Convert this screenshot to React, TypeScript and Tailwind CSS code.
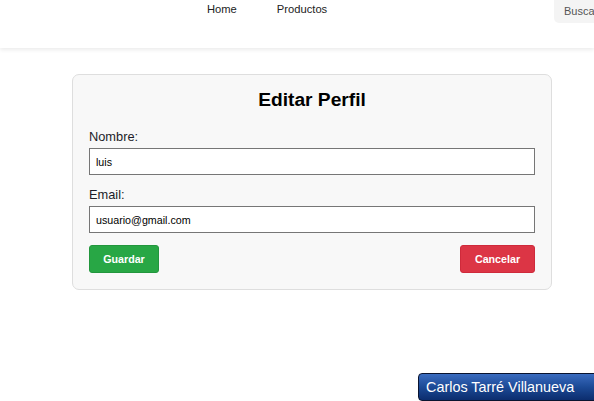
export default function App() {
  return (
    <div className="relative w-[594px] h-[401px] overflow-hidden bg-white font-['Liberation_Sans',Arial,sans-serif]">
      {/* header */}
      <header className="relative h-[48px] bg-white shadow-[0_2px_4px_rgba(0,0,0,0.08)] flex items-start">
        <nav className="flex ml-[207px] gap-[40px] pt-[2px] text-[11.2px] leading-[13px] text-[#222]">
          <a className="mt-[1px]">Home</a>
          <a className="mt-[1px]">Productos</a>
        </nav>
        <div className="ml-auto w-[40px] h-[23px] bg-[#f4f4f4] rounded-bl-[5px] pl-[10px] pt-[3px] text-[11px] text-[#555] whitespace-nowrap overflow-hidden">
          Buscar...
        </div>
      </header>

      {/* card */}
      <main className="pt-[26px]">
        <div className="ml-[72px] w-[480px] bg-[#f8f8f8] border border-[#dedede] rounded-[7px] px-[16px] pt-[14px] pb-[16px]">
          <h2 className="text-center text-[19.2px] leading-[22px] font-bold text-black">Editar Perfil</h2>

          <label className="block mt-[18px] text-[12.8px] leading-[15px] text-[#1c1c28]">Nombre:</label>
          <input
            defaultValue="luis"
            className="block mt-[4px] w-full h-[27px] border border-[#767676] bg-white px-[6px] text-[10.7px] text-black outline-none"
          />

          <label className="block mt-[12px] text-[12.8px] leading-[15px] text-[#1c1c28]">Email:</label>
          <input
            defaultValue="usuario@gmail.com"
            className="block mt-[4px] w-full h-[27px] border border-[#767676] bg-white px-[6px] text-[10.7px] text-black outline-none"
          />

          <div className="flex justify-between mt-[12px]">
            <button className="h-[28px] w-[70px] bg-[#28a745] border border-[#22963d] rounded-[3px] text-white font-bold text-[10.7px]">
              Guardar
            </button>
            <button className="h-[28px] w-[75px] bg-[#dc3545] border border-[#cf2a3b] rounded-[3px] text-white font-bold text-[10.7px]">
              Cancelar
            </button>
          </div>
        </div>
      </main>

      {/* author badge */}
      <div className="absolute left-[418px] top-[373px] w-[180px] h-[28px] rounded-[4px] border border-[#0a1430] bg-gradient-to-b from-[#3a6cc0] via-[#1c4a96] to-[#0c2d6e] pl-[7px] text-white text-[14.4px] leading-[26px] whitespace-nowrap">
        Carlos Tarré Villanueva
      </div>
    </div>
  );
}
